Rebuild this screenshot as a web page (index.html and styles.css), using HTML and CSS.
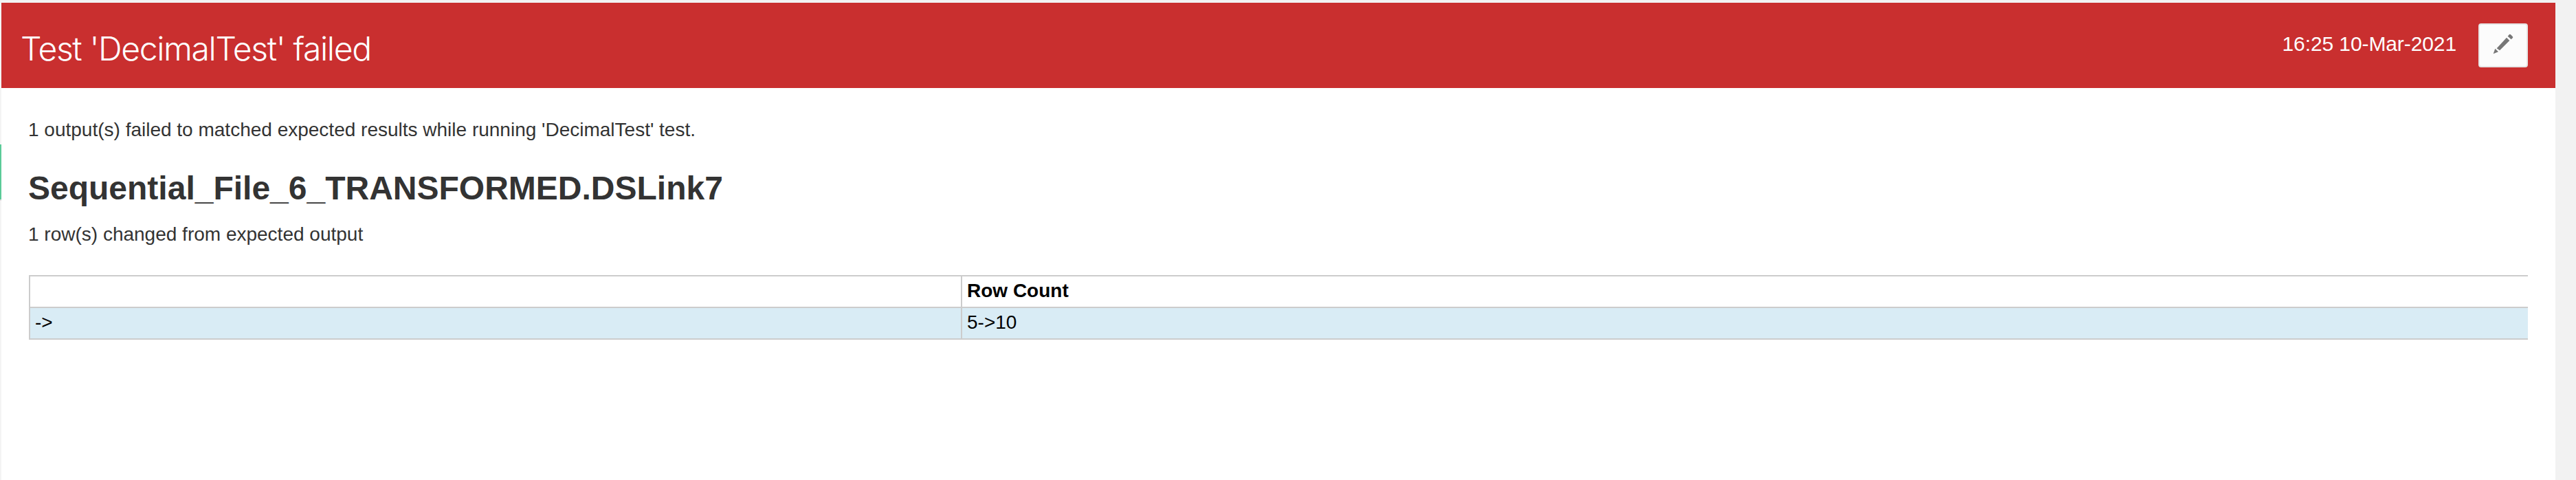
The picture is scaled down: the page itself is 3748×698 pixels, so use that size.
FILE: index.html
```html
<!DOCTYPE html>
<html lang="en">
<head>
<meta charset="utf-8">
<title>Test result</title>
<link rel="stylesheet" href="styles.css">
</head>
<body>
<div class="page">
  <aside class="rail"><div class="rail-status"></div></aside>
  <main class="panel">
    <header class="header">
      <h1 class="title"><span>Test 'DecimalTest' failed</span></h1>
      <div class="actions">
        <time class="date">16:25 10-Mar-2021</time>
        <button class="edit" aria-label="Edit">
          <svg class="pencil" viewBox="0 0 90 90"><path d="M2 88L10 65L24 79ZM17 64L60 17L73 30L30 73ZM65 11L72 3Q75 1 78 4L86 12Q89 15 87 18L80 25Z"/></svg>
        </button>
      </div>
    </header>
    <section class="content">
      <p class="summary"><span>1 output(s) failed to matched expected results while running 'DecimalTest' test.</span></p>
      <h2 class="link-name"><span>Sequential_File_6_TRANSFORMED.DSLink7</span></h2>
      <p class="changes"><span>1 row(s) changed from expected output</span></p>
      <div class="diff">
        <div class="row head"><div class="cell"></div><div class="cell"><span>Row Count</span></div></div>
        <div class="row changed"><div class="cell">-&gt;</div><div class="cell"><span>5-&gt;10</span></div></div>
      </div>
    </section>
  </main>
</div>
</body>
</html>
```
FILE: styles.css
```css
* { box-sizing: border-box; }
body {
  margin: 0;
  background: #f2f2f2;
  color: #333;
  font: 28px/40px "Liberation Sans", Arial, sans-serif;
}
h1, h2, p { margin: 0; }
.page { display: flex; height: 698px; padding: 4px 30px 0 0; overflow: hidden; }
.rail { width: 2px; padding-top: 206px; background: #f4f4f4; }
.rail-status { height: 82px; background: #5bcb98; border-bottom: 2px solid #ddd; }
.panel { flex: 1; background: #fff; }
.header {
  display: flex;
  justify-content: space-between;
  height: 124px;
  padding: 30px 40px 0 28px;
  background: #c92f2f;
  color: #fff;
}
.title {
  padding-top: 7px;
  font: 300 48px/60px Inter, Roboto, sans-serif;
  letter-spacing: -1.35px;
}
.actions { display: flex; align-items: flex-start; gap: 32px; }
.date { padding-top: 10px; font-size: 30px; line-height: 40px; letter-spacing: -0.1px; }
.edit {
  display: flex;
  align-items: center;
  justify-content: center;
  width: 72px;
  height: 64px;
  padding: 0 0 4px;
  border: 2px solid #e6e6e6;
  border-radius: 4px;
  background: #fcfcfc;
}
.pencil { width: 30px; height: 30px; fill: #777; }
.content { padding: 41px 40px 0; }
.summary { height: 40px; text-indent: -1px; }
.link-name { padding-top: 35px; font-size: 48px; line-height: 60px; text-indent: -1px; }
.changes { padding-top: 17px; text-indent: -1px; }
.diff {
  margin-top: 39px;
  border-top: 2px solid #ccc;
  border-left: 2px solid #ccc;
  color: #000;
}
.row { display: grid; grid-template-columns: 1356px 1fr; height: 46px; border-bottom: 2px solid #ccc; }
.cell { padding: 1px 7px 0; }
.cell:first-child { border-right: 2px solid #ccc; }
.head { font-weight: bold; }
.changed { background: #d9ecf5; }
```
